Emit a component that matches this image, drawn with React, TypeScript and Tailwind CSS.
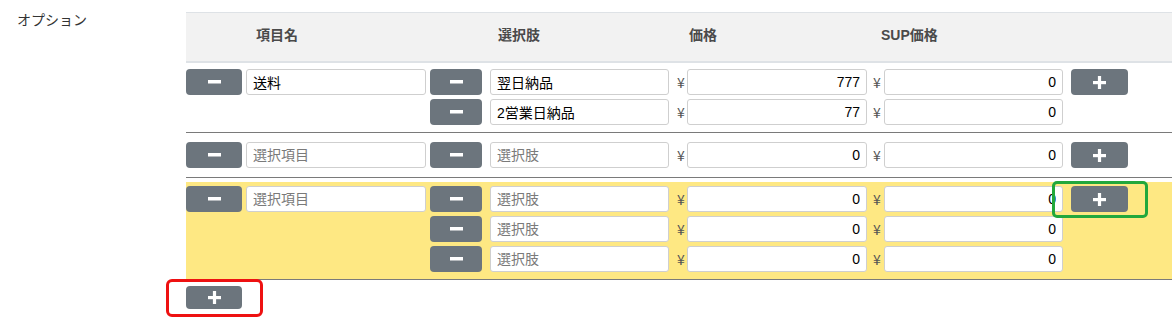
import React from "react";

const FONT = { fontFamily: '"Liberation Sans", "Noto Sans CJK JP", sans-serif' };
const CJK = { fontFamily: '"Noto Sans CJK JP", sans-serif' };

function Minus() {
  return (
    <svg width="13" height="4" viewBox="0 0 13 4">
      <rect x="0" y="0" width="13" height="3.5" fill="#fff" />
    </svg>
  );
}

function Plus() {
  return (
    <svg width="13" height="13" viewBox="0 0 13 13">
      <rect x="0" y="5" width="13" height="3.2" fill="#fff" />
      <rect x="4.9" y="0" width="3.2" height="13" fill="#fff" />
    </svg>
  );
}

function Btn({ kind, w }: { kind: "minus" | "plus"; w: string }) {
  return (
    <div className={`${w} h-[26px] shrink-0 rounded-[4px] bg-[#6c757d] flex items-center justify-center`}>
      {kind === "minus" ? <Minus /> : <Plus />}
    </div>
  );
}

function Field({ value, placeholder, w, right }: { value?: string; placeholder?: string; w: string; right?: boolean }) {
  return (
    <input
      readOnly
      value={value ?? ""}
      placeholder={placeholder}
      className={`${w} h-[26px] shrink-0 rounded-[3px] border border-[#cfcfcf] bg-white px-[6px] text-[14px] text-black placeholder:text-[#7a7a7a] outline-none ${right ? "text-right" : "text-left"}`}
      style={FONT}
    />
  );
}

function Yen({ pl, w }: { pl: string; w: string }) {
  return (
    <span className={`${w} ${pl} shrink-0 text-[14px] leading-[20px] text-[#555]`} style={CJK}>
      ¥
    </span>
  );
}

type RowProps = {
  first?: { value?: string; placeholder?: string };
  choice: { value?: string; placeholder?: string };
  price: string;
  sup: string;
  plus?: boolean;
};

function Row({ first, choice, price, sup, plus }: RowProps) {
  return (
    <div className="flex items-center h-[26px]">
      <div className="w-[244px] shrink-0 flex gap-[4px]">
        {first && (
          <>
            <Btn kind="minus" w="w-[56px]" />
            <Field w="w-[180px]" value={first.value} placeholder={first.placeholder} />
          </>
        )}
      </div>
      <Btn kind="minus" w="w-[52px]" />
      <div className="w-[8px] shrink-0" />
      <Field w="w-[179px]" value={choice.value} placeholder={choice.placeholder} />
      <Yen w="w-[18px]" pl="pl-[8px]" />
      <Field w="w-[180px]" value={price} right />
      <Yen w="w-[17px]" pl="pl-[6px]" />
      <Field w="w-[179px]" value={sup} right />
      <div className="w-[8px] shrink-0" />
      {plus && <Btn kind="plus" w="w-[57px]" />}
    </div>
  );
}

export default function App() {
  return (
    <div className="flex w-[1172px] h-[323px] bg-white text-[#333] overflow-hidden" style={FONT}>
      <div className="w-[186px] shrink-0 pl-[17px] pt-[10px] text-[14px] leading-[20px] text-[#333]">オプション</div>
      <div className="flex-1 pt-[12px] relative">
        {/* header */}
        <div className="h-[51px] border-t border-b-2 border-[#dee2e6] bg-[#f2f2f2] flex items-center pb-[4px] text-[14px] font-bold text-[#4a4a4a]">
          <div className="w-[244px] pl-[70px]">項目名</div>
          <div className="w-[248px] pl-[68px]">選択肢</div>
          <div className="w-[196px] pl-[11px]">価格</div>
          <div className="pl-[7px]">SUP価格</div>
        </div>
        {/* group 1 */}
        <div className="pt-[6px] pb-[7px] border-b border-[#7a7a7a] flex flex-col gap-[4px]">
          <Row first={{ value: "送料" }} choice={{ value: "翌日納品" }} price="777" sup="0" plus />
          <Row choice={{ value: "2営業日納品" }} price="77" sup="0" />
        </div>
        {/* group 2 */}
        <div className="pt-[9px] pb-[9px] border-b border-[#7a7a7a] flex flex-col gap-[4px]">
          <Row first={{ placeholder: "選択項目" }} choice={{ placeholder: "選択肢" }} price="0" sup="0" plus />
        </div>
        {/* group 3 highlighted */}
        <div className="mt-[4px] pt-[4px] pb-[7px] bg-[#fee883] border-b border-[#7a7a7a] flex flex-col gap-[4px]">
          <Row first={{ placeholder: "選択項目" }} choice={{ placeholder: "選択肢" }} price="0" sup="0" plus />
          <Row choice={{ placeholder: "選択肢" }} price="0" sup="0" />
          <Row choice={{ placeholder: "選択肢" }} price="0" sup="0" />
        </div>
        <div className="pt-[6px]">
          <div className="w-[56px] h-[23px] rounded-[4px] bg-[#6c757d] flex items-center justify-center">
            <Plus />
          </div>
        </div>
        {/* annotations */}
        <div className="absolute left-[-20px] top-[279px] w-[97px] h-[38px] border-[3px] border-[#ee1111] rounded-[6px]" />
        <div className="absolute left-[866px] top-[181px] w-[96px] h-[37px] border-[3px] border-[#22a83c] rounded-[5px]" />
      </div>
    </div>
  );
}
